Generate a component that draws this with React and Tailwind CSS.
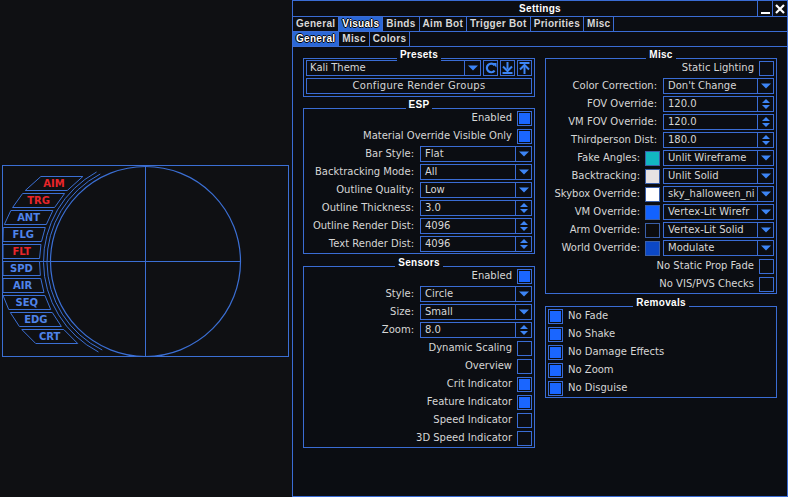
import React from 'react';

// Radar widget geometry (svg coords, page y = svg y + 160)
const CX = 145.5;
const CY = 101.5;
const arcX = (r, y) => CX - Math.sqrt(Math.max(0, r * r - (y - CY) * (y - CY)));

const RADAR_LABELS = [
  ['AIM', true], ['TRG', true], ['ANT', false], ['FLG', false], ['FLT', true],
  ['SPD', false], ['AIR', false], ['SEQ', false], ['EDG', false], ['CRT', false],
];

const ringPath = (r, y1, y2) =>
  `M ${arcX(r, y1)} ${y1} A ${r} ${r} 0 0 0 ${arcX(r, y2)} ${y2}`;

const Radar = () => (
  <svg className="absolute left-0 top-[160px]" width="292" height="200" viewBox="0 0 292 200" fill="none">
    <rect x="2.5" y="5.5" width="286" height="191" stroke="#3b6fd4" />
    <line x1="145.5" y1="5.5" x2="145.5" y2="196.5" stroke="#3b6fd4" />
    <line x1="2.5" y1="101.5" x2="240.5" y2="101.5" stroke="#3b6fd4" />
    <circle cx={CX} cy={CY} r="95" stroke="#3b6fd4" strokeWidth="1.2" />
    <path d={ringPath(98.5, 14, 190)} stroke="#3b6fd4" />
    <path d={ringPath(102, 12, 192)} stroke="#3b6fd4" />
    {RADAR_LABELS.map(([t, red], i) => {
      const top = 16 + i * 17;
      const bot = top + 14;
      const rt = arcX(106, top);
      const rb = arcX(106, bot);
      const lt = Math.max(3, rt - 42);
      const lb = Math.max(3, rb - 42);
      const tx = (lt + rt + lb + rb) / 4;
      return (
        <g key={t}>
          <polygon
            points={`${lt},${top + 0.5} ${rt},${top + 0.5} ${rb},${bot + 0.5} ${lb},${bot + 0.5}`}
            stroke="#3b6fd4"
            fill="#0f1013"
          />
          <text
            x={tx}
            y={top + 11}
            textAnchor="middle"
            fontFamily="DejaVu Sans, sans-serif"
            fontWeight="bold"
            fontSize="10"
            fill={red ? '#e8262a' : '#4f84ea'}
          >
            {t}
          </text>
        </g>
      );
    })}
  </svg>
);

const DownArrow = () => (
  <svg width="10" height="6" viewBox="0 0 10 6">
    <path d="M0 0.5 H10 L5 5.5 Z" fill="#3d85f5" />
  </svg>
);

const SpinArrows = () => (
  <svg width="8" height="10" viewBox="0 0 8 10">
    <path d="M0 4 L4 0 L8 4 Z" fill="#3d85f5" />
    <path d="M0 6 L8 6 L4 10 Z" fill="#3d85f5" />
  </svg>
);

const Dropdown = ({ value, spin, className = 'w-[112px]' }) => (
  <div className={`flex h-[16px] border border-[#3a6cd4] bg-[#0b0d12] ${className}`}>
    <div className="flex-1 overflow-hidden whitespace-nowrap pl-[4px] text-[10px] leading-[14px] text-[#d6d6d6]">
      {value}
    </div>
    <div className="flex w-[16px] items-center justify-center border-l border-[#3a6cd4]">
      {spin ? <SpinArrows /> : <DownArrow />}
    </div>
  </div>
);

const Checkbox = ({ on }) => (
  <div className="h-[15px] w-[15px] shrink-0 border border-[#3a6cd4] p-[1px]">
    {on && <div className="h-full w-full bg-[#1a66ff]" />}
  </div>
);

const Swatch = ({ color }) => (
  <div className={`h-[15px] w-[15px] shrink-0 border border-[#3a5fa8] ${color}`} />
);

const Label = ({ children }) => (
  <span className="whitespace-nowrap text-[10px] leading-[16px] text-[#d6d6d6]">{children}</span>
);

const CheckRow = ({ label, on }) => (
  <div className="flex h-[16px] items-center justify-end gap-[5px]">
    <Label>{label}</Label>
    <Checkbox on={on} />
  </div>
);

const SelectRow = ({ label, value, spin, swatch, wide }) => (
  <div className="flex h-[16px] items-center justify-end">
    <Label>{label}:</Label>
    {swatch && (
      <div className="ml-[5px] flex">
        <Swatch color={swatch} />
      </div>
    )}
    <div className={swatch ? 'ml-[3px]' : 'ml-[6px]'}>
      <Dropdown value={value} spin={spin} className={wide ? 'w-[111px]' : 'w-[112px]'} />
    </div>
  </div>
);

const GroupBox = ({ title, className = '', children }) => (
  <div className={`relative border border-[#3a6cd4] ${className}`}>
    <div className="absolute -top-[10px] left-0 right-0 flex justify-center">
      <span className="bg-[#0b0d12] px-[3px] font-['Liberation_Sans',sans-serif] text-[10px] font-bold leading-[12px] tracking-[0.3px] text-white">
        {title}
      </span>
    </div>
    {children}
  </div>
);

const IconBtn = ({ children }) => (
  <div className="flex h-[16px] w-[15px] items-center justify-center border border-[#3a6cd4]">{children}</div>
);

const TABS = ['General', 'Visuals', 'Binds', 'Aim Bot', 'Trigger Bot', 'Priorities', 'Misc'];
const SUBTABS = ['General', 'Misc', 'Colors'];

const TabRow = ({ items, active }) => (
  <div className="flex h-[15px] border-b border-[#3a6cd4] font-['Liberation_Sans',sans-serif] text-[10px] font-bold leading-[14px] tracking-[0.3px]">
    {items.map((t) => (
      <div
        key={t}
        className={
          t === active
            ? 'border-r border-[#3a6cd4] bg-[#2b68d6] px-[3px] text-white [text-shadow:1px_0_0_#000,-1px_0_0_#000,0_1px_0_#000,0_-1px_0_#000]'
            : 'border-r border-[#3a6cd4] px-[3px] text-[#d8d8d8]'
        }
      >
        {t}
      </div>
    ))}
  </div>
);

export default function App() {
  return (
    <div className="relative h-[497px] w-[788px] overflow-hidden bg-[#0f1013] font-['DejaVu_Sans',sans-serif]">
      <Radar />

      {/* Settings window */}
      <div className="absolute left-[292px] top-0 flex h-[497px] w-[496px] flex-col border border-[#3a6cd4] bg-[#0b0d12]">
        <div className="grid h-[16px] grid-cols-[30px_1fr_30px] border-b border-[#3a6cd4]">
          <div />
          <div className="text-center font-['Liberation_Sans',sans-serif] text-[10px] font-bold leading-[15px] tracking-[0.3px] text-white">
            Settings
          </div>
          <div className="flex">
            <div className="flex w-[15px] items-end justify-center border-l border-[#3a6cd4] pb-[2px]">
              <div className="h-[2px] w-[9px] bg-white" />
            </div>
            <div className="flex w-[15px] items-center justify-center border-l border-[#3a6cd4]">
              <svg width="10" height="10" viewBox="0 0 10 10">
                <path d="M1 1 L9 9 M9 1 L1 9" stroke="#fff" strokeWidth="2.2" />
              </svg>
            </div>
          </div>
        </div>

        <TabRow items={TABS} active="Visuals" />
        <TabRow items={SUBTABS} active="General" />

        <div className="flex gap-[10px] px-[10px]">
          {/* Left column */}
          <div className="flex w-[232px] flex-col">
            <GroupBox title="Presets" className="mt-[11px] px-[2px] pb-[2px] pt-[1px]">
              <div className="flex gap-[2px]">
                <div className="flex h-[16px] flex-1 border border-[#3a6cd4]">
                  <div className="flex-1 pl-[3px] text-[10px] leading-[14px] text-[#d6d6d6]">Kali Theme</div>
                  <div className="flex w-[16px] items-center justify-center border-l border-[#3a6cd4]">
                    <DownArrow />
                  </div>
                </div>
                <IconBtn>
                  <svg width="12" height="12" viewBox="0 0 12 12" fill="none">
                    <path d="M9.5 3.2 A4.3 4.3 0 1 0 9.6 8.6" stroke="#3d85f5" strokeWidth="2.2" />
                    <path d="M7 1 L11.5 1 L11.5 5.5 Z" fill="#3d85f5" />
                  </svg>
                </IconBtn>
                <IconBtn>
                  <svg width="11" height="12" viewBox="0 0 11 12" fill="none">
                    <path d="M5.5 0 V7" stroke="#3d85f5" strokeWidth="2" />
                    <path d="M1 4.5 L5.5 9 L10 4.5" stroke="#3d85f5" strokeWidth="2" />
                    <path d="M0.5 11 H10.5" stroke="#3d85f5" strokeWidth="2" />
                  </svg>
                </IconBtn>
                <IconBtn>
                  <svg width="11" height="12" viewBox="0 0 11 12" fill="none">
                    <path d="M0.5 1 H10.5" stroke="#3d85f5" strokeWidth="2" />
                    <path d="M1 7.5 L5.5 3 L10 7.5" stroke="#3d85f5" strokeWidth="2" />
                    <path d="M5.5 4 V12" stroke="#3d85f5" strokeWidth="2" />
                  </svg>
                </IconBtn>
              </div>
              <div className="mt-[2px] h-[16px] border border-[#3a6cd4] text-center text-[10px] leading-[14px] tracking-[0.3px] text-[#d6d6d6]">
                Configure Render Groups
              </div>
            </GroupBox>

            <GroupBox title="ESP" className="mt-[11px] flex flex-col gap-[2px] px-[2px] pb-[1px] pt-[1px]">
              <CheckRow label="Enabled" on />
              <CheckRow label="Material Override Visible Only" on />
              <SelectRow label="Bar Style" value="Flat" />
              <SelectRow label="Backtracking Mode" value="All" />
              <SelectRow label="Outline Quality" value="Low" />
              <SelectRow label="Outline Thickness" value="3.0" spin />
              <SelectRow label="Outline Render Dist" value="4096" spin />
              <SelectRow label="Text Render Dist" value="4096" spin />
            </GroupBox>

            <GroupBox title="Sensors" className="mt-[12px] flex flex-col gap-[2px] px-[2px] pb-[1px] pt-[1px]">
              <CheckRow label="Enabled" on />
              <SelectRow label="Style" value="Circle" />
              <SelectRow label="Size" value="Small" />
              <SelectRow label="Zoom" value="8.0" spin />
              <CheckRow label="Dynamic Scaling" />
              <CheckRow label="Overview" />
              <CheckRow label="Crit Indicator" on />
              <CheckRow label="Feature Indicator" on />
              <CheckRow label="Speed Indicator" />
              <CheckRow label="3D Speed Indicator" />
            </GroupBox>
          </div>

          {/* Right column */}
          <div className="flex w-[232px] flex-col">
            <GroupBox title="Misc" className="mt-[11px] flex flex-col gap-[2px] px-[2px] pb-[1px] pt-[1px]">
              <CheckRow label="Static Lighting" />
              <SelectRow label="Color Correction" value="Don't Change" wide />
              <SelectRow label="FOV Override" value="120.0" spin wide />
              <SelectRow label="VM FOV Override" value="120.0" spin wide />
              <SelectRow label="Thirdperson Dist" value="180.0" spin wide />
              <SelectRow label="Fake Angles" value="Unlit Wireframe" swatch="bg-[#12b6c2]" wide />
              <SelectRow label="Backtracking" value="Unlit Solid" swatch="bg-[#e6e2e2]" wide />
              <SelectRow label="Skybox Override" value="sky_halloween_ni" swatch="bg-white" wide />
              <SelectRow label="VM Override" value="Vertex-Lit Wirefr" swatch="bg-[#1262ff]" wide />
              <SelectRow label="Arm Override" value="Vertex-Lit Solid" swatch="bg-[#0c0c0e]" wide />
              <SelectRow label="World Override" value="Modulate" swatch="bg-[#0c48c6]" wide />
              <CheckRow label="No Static Prop Fade" />
              <CheckRow label="No VIS/PVS Checks" />
            </GroupBox>

            <GroupBox title="Removals" className="mt-[12px] flex flex-col gap-[2px] px-[2px] pb-[1px] pt-[1px]">
              {['No Fade', 'No Shake', 'No Damage Effects', 'No Zoom', 'No Disguise'].map((t) => (
                <div key={t} className="flex h-[16px] items-center gap-[5px]">
                  <Checkbox on />
                  <Label>{t}</Label>
                </div>
              ))}
            </GroupBox>
          </div>
        </div>
      </div>
    </div>
  );
}
